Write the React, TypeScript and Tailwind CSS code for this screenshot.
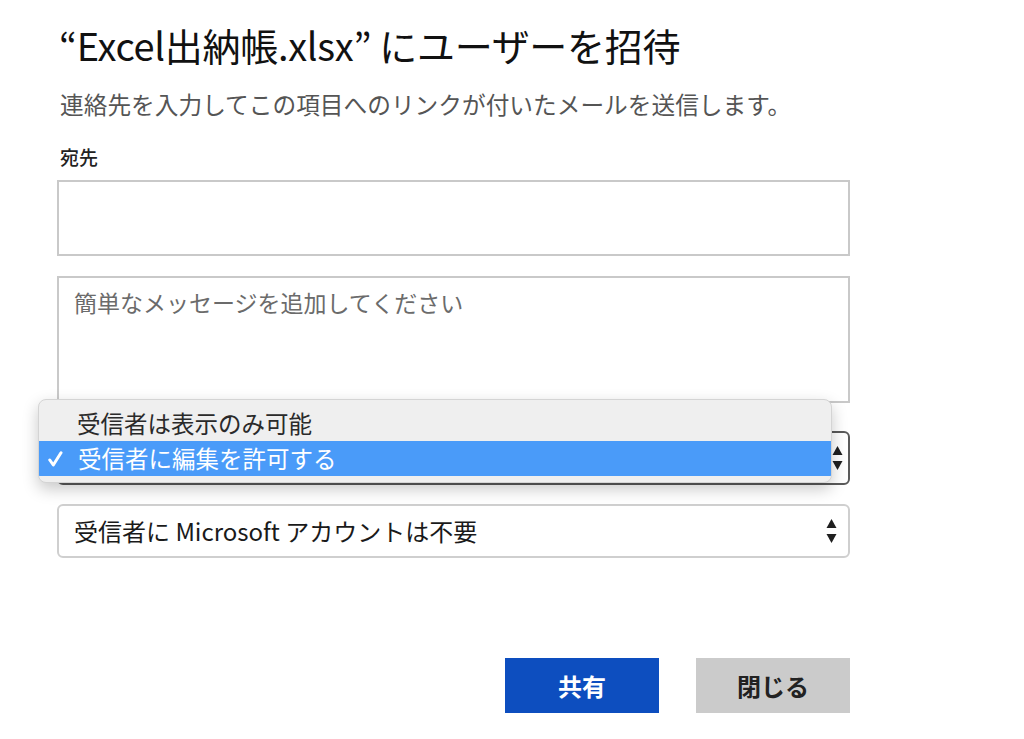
const font = { fontFamily: '"Noto Sans CJK JP", "Noto Sans", sans-serif' };

function UpDown({ className = '' }: { className?: string }) {
  return (
    <svg width="11" height="26" viewBox="0 0 11 26" className={className}>
      <path d="M5.5 1 L10.5 10 H0.5 Z" fill="#1f1f1f" />
      <path d="M5.5 25 L10.5 16 H0.5 Z" fill="#1f1f1f" />
    </svg>
  );
}

function Check() {
  return (
    <svg width="15" height="16" viewBox="0 0 15 16" className="ml-[9px] mr-[15px]">
      <path d="M1.8 9 L5.3 14 L13 1.8" fill="none" stroke="#fff" strokeWidth="3" strokeLinecap="round" strokeLinejoin="round" />
    </svg>
  );
}

export default function App() {
  return (
    <div className="w-[1024px] h-[739px] bg-white text-[#1a1a1a] overflow-hidden" style={font}>
      <div className="pl-[57px] w-[850px] flex flex-col">
        <h1 className="mt-[24px] pl-[2px] text-[38px] leading-[42px] font-normal text-[#111] tracking-[-0.3px]">
          “Excel出納帳.xlsx” にユーザーを招待
        </h1>
        <p className="mt-[23px] pl-[3px] text-[23.7px] leading-[30px] text-[#555]">
          連絡先を入力してこの項目へのリンクが付いたメールを送信します。
        </p>
        <label className="mt-[26px] pl-[3px] text-[19px] leading-[24px] font-medium text-[#222]">宛先</label>

        <div className="mt-[11px] h-[76px] border-2 border-[#c9c9c9] bg-white" />

        <div className="mt-[20px] h-[127px] border-2 border-[#c9c9c9] bg-white px-[15px] pt-[8px]">
          <span className="text-[23px] leading-[32px] text-[#6b6b6b]">簡単なメッセージを追加してください</span>
        </div>

        <div className="relative mt-[28px] h-[54px] rounded-[6px] border-2 border-[#5a5a5a] bg-white flex items-center justify-end px-[15px]">
          <UpDown className="-mr-[10px]" />
          <div className="absolute left-[-21px] top-[-34px] w-[794px] h-[84px] rounded-[8px] bg-[#efefef] border border-[#d4d4d4] shadow-[0_6px_16px_rgba(0,0,0,0.22)] flex flex-col pt-[7px] overflow-hidden">
            <div className="h-[34px] flex items-center pl-[38px] text-[23.5px] text-[#2a2a2a]">受信者は表示のみ可能</div>
            <div className="h-[35px] flex items-center bg-[#4a9bf9] text-white text-[23.5px]">
              <Check />
              <span>受信者に編集を許可する</span>
            </div>
          </div>
        </div>

        <div className="mt-[19px] h-[54px] rounded-[6px] border-2 border-[#cfcfcf] bg-white flex items-center justify-between px-[15px]">
          <span className="text-[24px] text-[#1a1a1a]">受信者に Microsoft アカウントは不要</span>
          <UpDown className="-mr-[4px]" />
        </div>

        <div className="mt-[100px] flex justify-end gap-[37px]">
          <button className="w-[154px] h-[55px] bg-[#0d4ebf] text-white text-[24px] font-bold">共有</button>
          <button className="w-[154px] h-[55px] bg-[#cbcbcb] text-[#222] text-[24px] font-bold">閉じる</button>
        </div>
      </div>
    </div>
  );
}
